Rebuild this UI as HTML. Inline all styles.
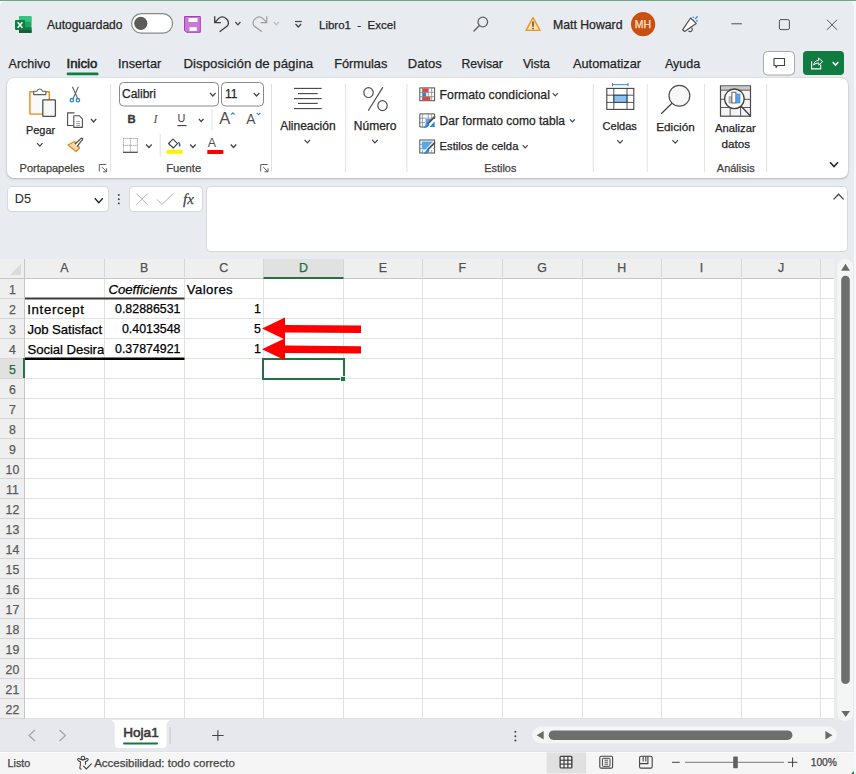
<!DOCTYPE html>
<html><head><meta charset="utf-8">
<style>
*{box-sizing:border-box;margin:0;padding:0}
html,body{width:856px;height:774px;overflow:hidden;background:#f4f7fb;font-family:"Liberation Sans",sans-serif;color:#242424;position:relative}
.a{position:absolute}
.t{position:absolute;white-space:nowrap;line-height:1;-webkit-text-stroke:0.25px currentColor}
</style></head><body>
<div class="a" style="left:0;top:0;width:856px;height:1px;background:#6ba684"></div>
<div class="a" style="left:0;top:1px;width:854px;height:773px;background:#e8ecf0;border-radius:6px 6px 0 0"></div>
<div class="a" style="left:7px;top:78px;width:841px;height:99.5px;background:#fff;border-radius:7px;box-shadow:0 0 0 0.5px rgba(0,0,0,.06),0 1px 2.5px rgba(0,0,0,.22)"></div>
<div class="a" style="left:8px;top:187px;width:100px;height:24px;background:#fff;border-radius:4px;box-shadow:0 0 0 1px #d9d9d9,0 1px 1px rgba(0,0,0,.08)"></div>
<div class="a" style="left:130px;top:187px;width:71.5px;height:24px;background:#fff;border-radius:4px;box-shadow:0 0 0 1px #d9d9d9,0 1px 1px rgba(0,0,0,.08)"></div>
<div class="a" style="left:207px;top:187px;width:640px;height:64px;background:#fff;border-radius:4px;box-shadow:0 0 0 1px #d9d9d9,0 1px 1px rgba(0,0,0,.08)"></div>
<div class="a" style="left:0;top:720px;width:854px;height:31px;background:#e6e8ed"></div>
<div class="a" style="left:0;top:751px;width:854px;height:1px;background:#e2e3e8"></div>
<div class="a" style="left:0;top:752px;width:854px;height:22px;background:#f5f5f5;border-top:1px solid #fbfbfb"></div>
<svg class="a" style="left:0;top:0" width="856" height="774"><rect x="0" y="259" width="834" height="19" fill="#efefef"/><rect x="263.5" y="259" width="80" height="19" fill="#e1e1e1"/><rect x="25" y="278" width="809" height="442" fill="#ffffff"/><rect x="0" y="278" width="24.5" height="442" fill="#efefef"/><rect x="0" y="358" width="24.5" height="20" fill="#e1e1e1"/><line x1="25" y1="298.5" x2="834" y2="298.5" stroke="#e1e1e1" stroke-width="1"/><line x1="0" y1="298.5" x2="24" y2="298.5" stroke="#d6d6d6" stroke-width="1"/><line x1="25" y1="318.5" x2="834" y2="318.5" stroke="#e1e1e1" stroke-width="1"/><line x1="0" y1="318.5" x2="24" y2="318.5" stroke="#d6d6d6" stroke-width="1"/><line x1="25" y1="338.5" x2="834" y2="338.5" stroke="#e1e1e1" stroke-width="1"/><line x1="0" y1="338.5" x2="24" y2="338.5" stroke="#d6d6d6" stroke-width="1"/><line x1="25" y1="358.5" x2="834" y2="358.5" stroke="#e1e1e1" stroke-width="1"/><line x1="0" y1="358.5" x2="24" y2="358.5" stroke="#d6d6d6" stroke-width="1"/><line x1="25" y1="378.5" x2="834" y2="378.5" stroke="#e1e1e1" stroke-width="1"/><line x1="0" y1="378.5" x2="24" y2="378.5" stroke="#d6d6d6" stroke-width="1"/><line x1="25" y1="398.5" x2="834" y2="398.5" stroke="#e1e1e1" stroke-width="1"/><line x1="0" y1="398.5" x2="24" y2="398.5" stroke="#d6d6d6" stroke-width="1"/><line x1="25" y1="418.5" x2="834" y2="418.5" stroke="#e1e1e1" stroke-width="1"/><line x1="0" y1="418.5" x2="24" y2="418.5" stroke="#d6d6d6" stroke-width="1"/><line x1="25" y1="438.5" x2="834" y2="438.5" stroke="#e1e1e1" stroke-width="1"/><line x1="0" y1="438.5" x2="24" y2="438.5" stroke="#d6d6d6" stroke-width="1"/><line x1="25" y1="458.5" x2="834" y2="458.5" stroke="#e1e1e1" stroke-width="1"/><line x1="0" y1="458.5" x2="24" y2="458.5" stroke="#d6d6d6" stroke-width="1"/><line x1="25" y1="478.5" x2="834" y2="478.5" stroke="#e1e1e1" stroke-width="1"/><line x1="0" y1="478.5" x2="24" y2="478.5" stroke="#d6d6d6" stroke-width="1"/><line x1="25" y1="498.5" x2="834" y2="498.5" stroke="#e1e1e1" stroke-width="1"/><line x1="0" y1="498.5" x2="24" y2="498.5" stroke="#d6d6d6" stroke-width="1"/><line x1="25" y1="518.5" x2="834" y2="518.5" stroke="#e1e1e1" stroke-width="1"/><line x1="0" y1="518.5" x2="24" y2="518.5" stroke="#d6d6d6" stroke-width="1"/><line x1="25" y1="538.5" x2="834" y2="538.5" stroke="#e1e1e1" stroke-width="1"/><line x1="0" y1="538.5" x2="24" y2="538.5" stroke="#d6d6d6" stroke-width="1"/><line x1="25" y1="558.5" x2="834" y2="558.5" stroke="#e1e1e1" stroke-width="1"/><line x1="0" y1="558.5" x2="24" y2="558.5" stroke="#d6d6d6" stroke-width="1"/><line x1="25" y1="578.5" x2="834" y2="578.5" stroke="#e1e1e1" stroke-width="1"/><line x1="0" y1="578.5" x2="24" y2="578.5" stroke="#d6d6d6" stroke-width="1"/><line x1="25" y1="598.5" x2="834" y2="598.5" stroke="#e1e1e1" stroke-width="1"/><line x1="0" y1="598.5" x2="24" y2="598.5" stroke="#d6d6d6" stroke-width="1"/><line x1="25" y1="618.5" x2="834" y2="618.5" stroke="#e1e1e1" stroke-width="1"/><line x1="0" y1="618.5" x2="24" y2="618.5" stroke="#d6d6d6" stroke-width="1"/><line x1="25" y1="638.5" x2="834" y2="638.5" stroke="#e1e1e1" stroke-width="1"/><line x1="0" y1="638.5" x2="24" y2="638.5" stroke="#d6d6d6" stroke-width="1"/><line x1="25" y1="658.5" x2="834" y2="658.5" stroke="#e1e1e1" stroke-width="1"/><line x1="0" y1="658.5" x2="24" y2="658.5" stroke="#d6d6d6" stroke-width="1"/><line x1="25" y1="678.5" x2="834" y2="678.5" stroke="#e1e1e1" stroke-width="1"/><line x1="0" y1="678.5" x2="24" y2="678.5" stroke="#d6d6d6" stroke-width="1"/><line x1="25" y1="698.5" x2="834" y2="698.5" stroke="#e1e1e1" stroke-width="1"/><line x1="0" y1="698.5" x2="24" y2="698.5" stroke="#d6d6d6" stroke-width="1"/><line x1="25" y1="718.5" x2="834" y2="718.5" stroke="#e1e1e1" stroke-width="1"/><line x1="0" y1="718.5" x2="24" y2="718.5" stroke="#d6d6d6" stroke-width="1"/><line x1="104.5" y1="278" x2="104.5" y2="720" stroke="#e1e1e1" stroke-width="1"/><line x1="104.5" y1="259" x2="104.5" y2="277" stroke="#d6d6d6" stroke-width="1"/><line x1="184.5" y1="278" x2="184.5" y2="720" stroke="#e1e1e1" stroke-width="1"/><line x1="184.5" y1="259" x2="184.5" y2="277" stroke="#d6d6d6" stroke-width="1"/><line x1="263.5" y1="278" x2="263.5" y2="720" stroke="#e1e1e1" stroke-width="1"/><line x1="263.5" y1="259" x2="263.5" y2="277" stroke="#d6d6d6" stroke-width="1"/><line x1="343.5" y1="278" x2="343.5" y2="720" stroke="#e1e1e1" stroke-width="1"/><line x1="343.5" y1="259" x2="343.5" y2="277" stroke="#d6d6d6" stroke-width="1"/><line x1="422.5" y1="278" x2="422.5" y2="720" stroke="#e1e1e1" stroke-width="1"/><line x1="422.5" y1="259" x2="422.5" y2="277" stroke="#d6d6d6" stroke-width="1"/><line x1="502.5" y1="278" x2="502.5" y2="720" stroke="#e1e1e1" stroke-width="1"/><line x1="502.5" y1="259" x2="502.5" y2="277" stroke="#d6d6d6" stroke-width="1"/><line x1="582.5" y1="278" x2="582.5" y2="720" stroke="#e1e1e1" stroke-width="1"/><line x1="582.5" y1="259" x2="582.5" y2="277" stroke="#d6d6d6" stroke-width="1"/><line x1="661.5" y1="278" x2="661.5" y2="720" stroke="#e1e1e1" stroke-width="1"/><line x1="661.5" y1="259" x2="661.5" y2="277" stroke="#d6d6d6" stroke-width="1"/><line x1="741.5" y1="278" x2="741.5" y2="720" stroke="#e1e1e1" stroke-width="1"/><line x1="741.5" y1="259" x2="741.5" y2="277" stroke="#d6d6d6" stroke-width="1"/><line x1="820.5" y1="278" x2="820.5" y2="720" stroke="#e1e1e1" stroke-width="1"/><line x1="820.5" y1="259" x2="820.5" y2="277" stroke="#d6d6d6" stroke-width="1"/><line x1="0" y1="278.5" x2="834" y2="278.5" stroke="#c6c6c6" stroke-width="1"/><line x1="24.5" y1="259" x2="24.5" y2="720" stroke="#c6c6c6" stroke-width="1"/><line x1="0" y1="719.5" x2="834" y2="719.5" stroke="#e8e8e8" stroke-width="1"/><rect x="263.5" y="277" width="80" height="2" fill="#217346"/><rect x="23" y="358" width="2" height="20" fill="#217346"/><path d="M21 263.5 L21 275 L10 275 Z" fill="#dcdcdc"/><rect x="25" y="297.5" width="159.5" height="2" fill="#3a3a3a"/><rect x="25" y="357.5" width="159.5" height="2.5" fill="#000000"/><rect x="263" y="359" width="81" height="20" fill="none" stroke="#217346" stroke-width="2"/><rect x="340.5" y="376.5" width="5" height="5" fill="#217346" stroke="#fff" stroke-width="0.8"/><path d="M262 328.6 L285 317.6 L285 324.90000000000003 L361 325.6 L361 332.90000000000003 L285 332.40000000000003 L285 339.6 Z" fill="#ff0000"/><path d="M262 349.2 L285 338.2 L285 345.5 L361 346.2 L361 353.5 L285 353.0 L285 360.2 Z" fill="#ff0000"/></svg>
<svg class="a" style="left:0;top:0" width="856" height="774"><rect x="19" y="16" width="12.5" height="17" rx="1.5" fill="#21a366"/><rect x="19" y="16" width="12.5" height="5.7" rx="1" fill="#33c481"/><rect x="19" y="27.3" width="12.5" height="5.7" rx="1" fill="#107c41"/><rect x="19" y="30" width="12.5" height="3" fill="#185c37"/><rect x="15" y="20" width="10" height="10" rx="1" fill="#107c41"/><path d="M17.6 22.2 L22.4 27.8 M22.4 22.2 L17.6 27.8" stroke="#fff" stroke-width="1.5"/><rect x="131.6" y="13.6" width="41" height="19.6" rx="9.8" fill="#fff" stroke="#888" stroke-width="1.2"/><circle cx="140.8" cy="23.3" r="6.6" fill="#5c5c5c"/><path d="M184.5 16.5 H200.3 V32.3 H186.5 L184.5 30.3 Z" fill="#c978d6" stroke="#a83bb8" stroke-width="1"/><rect x="188.5" y="18" width="9" height="4" fill="#fff"/><rect x="189.5" y="27.2" width="7.2" height="3.8" fill="#fff"/><path d="M214.7 16.3 V22.7 H220.9 M215.2 22.2 L218.5 18.6 A5.9 5.9 0 0 1 227.6 25.8 L219.6 31.8" fill="none" stroke="#3c3c3c" stroke-width="1.3" stroke-linejoin="round"/><path d="M235.4 22.0 L237.9 24.799999999999997 L240.4 22.0" fill="none" stroke="#424242" stroke-width="1.2"/><g transform="matrix(-1 0 0 1 481.5 0)"><path d="M214.7 16.3 V22.7 H220.9 M215.2 22.2 L218.5 18.6 A5.9 5.9 0 0 1 227.6 25.8 L219.6 31.8" fill="none" stroke="#9e9e9e" stroke-width="1.2" stroke-linejoin="round"/></g><path d="M273.7 22.0 L276.2 24.799999999999997 L278.7 22.0" fill="none" stroke="#bdbdbd" stroke-width="1.2"/><path d="M295 21.5 H301.7" stroke="#424242" stroke-width="1.2"/><path d="M295.55 24.0 L298.3 27.0 L301.05 24.0" fill="none" stroke="#424242" stroke-width="1.2"/><circle cx="482.8" cy="22" r="4.8" fill="none" stroke="#616161" stroke-width="1.3"/><path d="M479.4 25.5 L474 31" stroke="#616161" stroke-width="1.4" stroke-linecap="round"/><path d="M533 17.6 L540 30.4 H526 Z" fill="#fbe2a1" stroke="#f0922a" stroke-width="1.4" stroke-linejoin="round"/><path d="M533 21.6 V26.8" stroke="#4a4a4a" stroke-width="1.5"/><rect x="532.25" y="27.8" width="1.5" height="1.4" fill="#4a4a4a"/><circle cx="643.1" cy="24.2" r="12.1" fill="#ca5010"/><path d="M688.5 31 A2 2 0 1 0 691.5 27.6" fill="none" stroke="#505050" stroke-width="1.2"/><path d="M682.6 29.8 L690.6 18 L696.2 23.4 L684.6 31.4 Z" fill="#fff" stroke="#505050" stroke-width="1.25" stroke-linejoin="round"/><circle cx="693.3" cy="17.3" r="0.8" fill="#2b88d8"/><path d="M695.6 18.6 L697.2 16.8" stroke="#2b88d8" stroke-width="1.3" stroke-linecap="round"/><circle cx="697" cy="20.8" r="0.85" fill="#2b88d8"/><path d="M731.3 23.8 H741.9" stroke="#505050" stroke-width="1"/><rect x="779.4" y="19.6" width="10" height="10" rx="1.6" fill="none" stroke="#505050" stroke-width="1"/><path d="M827 19.8 L837 29.8 M837 19.8 L827 29.8" stroke="#505050" stroke-width="1"/><rect x="763.5" y="51.5" width="31" height="23.5" rx="4" fill="#fff" stroke="#a8a8a8" stroke-width="1"/><path d="M774 58.5 H784.5 V65.5 H777.5 L776 67.6 V65.5 H774 Z" fill="none" stroke="#424242" stroke-width="1.1" stroke-linejoin="round"/><rect x="803" y="51" width="41" height="24" rx="4" fill="#107c41"/><path d="M811.6 61.3 V68.9 H820.7 V64.4" fill="none" stroke="#fff" stroke-width="1.1"/><path d="M813.6 65 Q814.6 60.6 818.6 60.3 V58 L822.6 61.6 L818.8 65.2 V62.9 Q815.8 62.8 813.6 65 Z" fill="none" stroke="#fff" stroke-width="1" stroke-linejoin="round"/><path d="M832.7 62.1 L835.5 65.1 L838.3 62.1" fill="none" stroke="#fff" stroke-width="1.5"/><rect x="66.6" y="72.6" width="32" height="2.6" rx="1.3" fill="#107c41"/><rect x="110.1" y="84" width="1" height="88" fill="#e1e1e1"/><rect x="271.0" y="84" width="1" height="88" fill="#e1e1e1"/><rect x="345.2" y="84" width="1" height="88" fill="#e1e1e1"/><rect x="406.4" y="84" width="1" height="88" fill="#e1e1e1"/><rect x="592.7" y="84" width="1" height="88" fill="#e1e1e1"/><rect x="646.7" y="84" width="1" height="88" fill="#e1e1e1"/><rect x="704.1" y="84" width="1" height="88" fill="#e1e1e1"/><rect x="766.1" y="84" width="1" height="88" fill="#e1e1e1"/><rect x="29.9" y="91.8" width="19.4" height="22.3" rx="0.4" fill="#f9f9f9" stroke="#e8891a" stroke-width="1.4"/><path d="M33.6 94.6 V91.3 H36.8 A3 3 0 0 1 42.6 91.3 H45.8 V94.6 Z" fill="#fafafa" stroke="#616161" stroke-width="1.1" stroke-linejoin="round"/><rect x="42.8" y="99.9" width="12.6" height="16.5" rx="0.6" fill="#f8f8f8" stroke="#505050" stroke-width="1.3"/><path d="M37.05 143.1 L39.8 146.1 L42.55 143.1" fill="none" stroke="#424242" stroke-width="1.2"/><path d="M72.4 86.7 L77.9 99 M78.4 86.7 L72.9 99" stroke="#616161" stroke-width="1.1"/><circle cx="71.9" cy="100.2" r="1.7" fill="none" stroke="#2b88d8" stroke-width="1.3"/><circle cx="77.9" cy="100.2" r="1.7" fill="none" stroke="#2b88d8" stroke-width="1.3"/><path d="M74.5 112.9 H67.6 V125.5 H73.5" fill="none" stroke="#505050" stroke-width="1.1"/><path d="M73.8 115.7 H79.3 L82.4 118.8 V127.4 H73.8 Z" fill="#fff" stroke="#505050" stroke-width="1.1" stroke-linejoin="round"/><path d="M76.2 121.6 H80.2 M76.2 123.6 H80.2 M76.2 125.6 H80.2" stroke="#616161" stroke-width="0.6"/><path d="M91.0 119.0 L93.6 122.0 L96.19999999999999 119.0" fill="none" stroke="#424242" stroke-width="1.2"/><path d="M68 145 L74.5 141.5 L79.5 148 L76 151.5 Z" fill="#fbd7b0" stroke="#e8891a" stroke-width="1.3" stroke-linejoin="round"/><path d="M74.8 144.3 L78.8 140.5 L81.2 138.3 A1 1 0 0 1 82.6 139.7 L80.4 142.1 L77 146.6" fill="#fff" stroke="#505050" stroke-width="1.2" stroke-linejoin="round"/><path d="M99.3 171.5 V164.5 H106.3" fill="none" stroke="#616161" stroke-width="1"/><path d="M101.8 167 L106.6 171.8 M106.6 168.3 V171.8 H103.1" fill="none" stroke="#616161" stroke-width="1"/><path d="M260.7 171.5 V164.5 H267.7" fill="none" stroke="#616161" stroke-width="1"/><path d="M263.2 167 L268.0 171.8 M268.0 168.3 V171.8 H264.5" fill="none" stroke="#616161" stroke-width="1"/><rect x="119.5" y="82.5" width="99" height="23.5" rx="4" fill="#fff" stroke="#8a8a8a" stroke-width="1"/><rect x="221.5" y="82.5" width="42" height="23.5" rx="4" fill="#fff" stroke="#8a8a8a" stroke-width="1"/><path d="M210.05 93.0 L212.8 96.0 L215.55 93.0" fill="none" stroke="#424242" stroke-width="1.2"/><path d="M253.75 93.0 L256.5 96.0 L259.25 93.0" fill="none" stroke="#424242" stroke-width="1.2"/><path d="M177.3 125.6 H186.6" stroke="#424242" stroke-width="1.1"/><path d="M198.79999999999998 118.9 L201.2 121.5 L203.6 118.9" fill="none" stroke="#424242" stroke-width="1.2"/><rect x="211.4" y="109" width="1" height="21" fill="#e1e1e1"/><path d="M231 114.6 L232.8 112.8 L234.6 114.6" fill="none" stroke="#2b88d8" stroke-width="1.1"/><path d="M256.8 112.8 L258.6 114.6 L260.4 112.8" fill="none" stroke="#2b88d8" stroke-width="1.1"/><path d="M123.4 138.4 H137.4 V152.3 M123.4 138.4 V152.3 M130.4 138.4 V152.3 M123.4 145.4 H137.4" fill="none" stroke="#767676" stroke-width="0.9" stroke-dasharray="1 1"/><path d="M123 152.3 H137.8" stroke="#424242" stroke-width="1.2"/><path d="M146.15 144.5 L148.9 147.5 L151.65 144.5" fill="none" stroke="#424242" stroke-width="1.2"/><rect x="159.7" y="134" width="1" height="22.8" fill="#e1e1e1"/><path d="M168.5 143.5 L173 139.2 L177.5 143.7 L173.3 148 Z" fill="#fff" stroke="#424242" stroke-width="1.1" stroke-linejoin="round"/><path d="M178.5 142 Q180 143.5 179.6 146.5" fill="none" stroke="#2b6cb0" stroke-width="1.6"/><rect x="166.6" y="149.8" width="16" height="4" fill="#fff200"/><path d="M190.15 144.5 L192.9 147.5 L195.65 144.5" fill="none" stroke="#424242" stroke-width="1.2"/><rect x="207.3" y="150" width="16" height="4" fill="#ff0000"/><path d="M230.75 144.5 L233.5 147.5 L236.25 144.5" fill="none" stroke="#424242" stroke-width="1.2"/><path d="M294 88.4 H321.7" stroke="#424242" stroke-width="1.1"/><path d="M298 93.6 H317.7" stroke="#424242" stroke-width="1.1"/><path d="M294 98.6 H321.7" stroke="#424242" stroke-width="1.1"/><path d="M298 103.4 H317.7" stroke="#424242" stroke-width="1.1"/><path d="M294 108.6 H321.7" stroke="#424242" stroke-width="1.1"/><path d="M304.65 139.8 L307.4 142.8 L310.15 139.8" fill="none" stroke="#424242" stroke-width="1.2"/><ellipse cx="368.5" cy="92.6" rx="4.7" ry="4.9" fill="none" stroke="#505050" stroke-width="1.2"/><ellipse cx="382.5" cy="105.6" rx="4.7" ry="5" fill="none" stroke="#505050" stroke-width="1.2"/><path d="M382.6 87.6 L368.5 110.3" stroke="#505050" stroke-width="1.2" stroke-linecap="round"/><path d="M372.15 139.8 L374.9 142.8 L377.65 139.8" fill="none" stroke="#424242" stroke-width="1.2"/><rect x="419.8" y="87.9" width="14.8" height="12.8" fill="#fff" stroke="#505050" stroke-width="1"/><rect x="422.4" y="88.4" width="5.8" height="4" fill="#e84040"/><rect x="422.4" y="92.6" width="3.8" height="4" fill="#2b88d8"/><rect x="422.4" y="96.8" width="8" height="3.6" fill="#e84040"/><path d="M419.8 92.3 H434.6 M419.8 96.6 H434.6 M422.4 87.9 V100.7 M428.3 87.9 V100.7 M431.7 87.9 V100.7" stroke="#7a7a7a" stroke-width="0.7"/><path d="M552.8 93.2 L555.3 95.8 L557.8 93.2" fill="none" stroke="#424242" stroke-width="1.2"/><path d="M425 127 H419.8 V113.9 H434.6 V119" fill="none" stroke="#505050" stroke-width="1"/><path d="M419.8 118.2 H434.6 M419.8 122.6 H425 M422.4 113.9 V127 M428.3 113.9 V118.2 M431.7 113.9 V118.2" stroke="#7a7a7a" stroke-width="0.7"/><path d="M425.5 119 H433.2 L426.5 126.4 H425.5 Z" fill="#5aa7e8"/><path d="M434.6 121.5 V127 H429.5 Z" fill="#2b88d8"/><path d="M434.5 116.8 L427.5 123.8" stroke="#505050" stroke-width="1.8" stroke-linecap="round"/><path d="M427.8 123.2 L424.2 127.4 Q426.8 128.2 429.2 125 Z" fill="#2b88d8" stroke="#2b88d8" stroke-width="0.8"/><path d="M569.9 119.3 L572.4 121.89999999999999 L574.9 119.3" fill="none" stroke="#424242" stroke-width="1.2"/><rect x="419.8" y="140" width="14.8" height="13" fill="#fff" stroke="#505050" stroke-width="1"/><path d="M421.8 141.5 H433 L425.5 149.5 H421.8 Z" fill="#5aa7e8"/><path d="M419.8 144.4 H421.8 M419.8 148.6 H421.8 M433 148.6 H434.6 M422.4 150 V153 M428.3 150 V153 M431.7 150 V153" stroke="#7a7a7a" stroke-width="0.7"/><path d="M434.5 142.8 L427.5 149.8" stroke="#505050" stroke-width="1.8" stroke-linecap="round"/><path d="M427.8 149.2 L424.2 153.4 Q426.8 154.2 429.2 151 Z" fill="#2b88d8" stroke="#2b88d8" stroke-width="0.8"/><path d="M522.7 145.2 L525.2 147.8 L527.7 145.2" fill="none" stroke="#424242" stroke-width="1.2"/><path d="M612.5 84.7 H628 M612.5 83 V86.4 M628 83 V86.4" stroke="#2b88d8" stroke-width="1"/><rect x="606.8" y="88.4" width="27" height="21" fill="#fff" stroke="#424242" stroke-width="1.1"/><rect x="613.8" y="95.2" width="13.2" height="7.2" fill="#8cc0ef" stroke="#1f6fbf" stroke-width="1"/><path d="M606.8 95.2 H633.8 M606.8 102.4 H633.8 M613.8 88.4 V109.4 M627 88.4 V109.4" stroke="#424242" stroke-width="0.9"/><path d="M617.25 140.1 L620 143.1 L622.75 140.1" fill="none" stroke="#424242" stroke-width="1.2"/><circle cx="679.4" cy="95.8" r="10.4" fill="#f7f7f7" stroke="#505050" stroke-width="1.2"/><path d="M672 103.2 L661.2 113.8" stroke="#424242" stroke-width="1.2"/><path d="M672.45 140.1 L675.2 143.1 L677.95 140.1" fill="none" stroke="#424242" stroke-width="1.2"/><rect x="720.5" y="85.9" width="30" height="30.3" fill="#f4f4f4" stroke="#4a4a4a" stroke-width="1.2"/><rect x="721" y="86.5" width="29" height="3.6" fill="#c8c8c8"/><path d="M720.5 90.2 H750.5 M720.5 99.3 H750.5 M720.5 107.5 H750.5 M730.2 90.2 V116.2 M740.6 90.2 V116.2" stroke="#5a5a5a" stroke-width="1"/><circle cx="734.4" cy="98.8" r="9.8" fill="#fff" stroke="#424242" stroke-width="1.4"/><rect x="729" y="96.8" width="2.2" height="6.2" fill="#c8c8c8" stroke="#6a6a6a" stroke-width="0.5"/><rect x="731.9" y="92.2" width="4" height="10.8" fill="#fff" stroke="#505050" stroke-width="0.9"/><rect x="736.6" y="94" width="3.4" height="9" fill="#5aa7e8" stroke="#2b88d8" stroke-width="0.6"/><path d="M741.2 106.3 L750.8 116.4" stroke="#424242" stroke-width="1.4"/><path d="M830.0 162.20000000000002 L834 166.6 L838.0 162.20000000000002" fill="none" stroke="#242424" stroke-width="1.5"/><path d="M94.8 198.3 L98.8 202.7 L102.8 198.3" fill="none" stroke="#242424" stroke-width="1.4"/><circle cx="118.8" cy="195" r="0.95" fill="#424242"/><circle cx="118.8" cy="199.2" r="0.95" fill="#424242"/><circle cx="118.8" cy="203.4" r="0.95" fill="#424242"/><path d="M136.4 193.6 L147.6 204.8 M147.6 193.6 L136.4 204.8" stroke="#b4b4b4" stroke-width="1"/><path d="M157.2 199.4 L162 204.4 L173.2 193.6" fill="none" stroke="#b4b4b4" stroke-width="1"/><path d="M833.6 199.4 L838.6 194.2 L843.6 199.4" fill="none" stroke="#424242" stroke-width="1.3"/><rect x="837.5" y="259" width="15.5" height="462" rx="7.7" fill="#f5f5f5"/><path d="M841 270.7 L845.5 263.7 L850 270.7 Z" fill="#6a6a6a"/><rect x="841.2" y="275.8" width="8.6" height="408.2" rx="4.3" fill="#6e6e6e"/><path d="M841.4 711 L845.7 717 L850 711 Z" fill="#6a6a6a"/><rect x="532.4" y="726.6" width="304.6" height="16.7" rx="8.3" fill="#f5f5f5"/><path d="M543.7 731 L536.6 735.3 L543.7 739.6 Z" fill="#6a6a6a"/><rect x="548.7" y="730.4" width="243.7" height="9.6" rx="4.8" fill="#6e6e6e"/><path d="M825.4 731 L832.4 735.3 L825.4 739.6 Z" fill="#6a6a6a"/><circle cx="515.4" cy="731.8" r="1" fill="#424242"/><circle cx="515.4" cy="736.2" r="1" fill="#424242"/><circle cx="515.4" cy="740.6" r="1" fill="#424242"/><path d="M35 730 L29 735.5 L35 741" fill="none" stroke="#a0a0a0" stroke-width="1.1"/><path d="M59.5 730 L65.5 735.5 L59.5 741" fill="none" stroke="#a0a0a0" stroke-width="1.1"/><path d="M109.6 720 H171.6 A5 5 0 0 0 166.6 725 V744 A4 4 0 0 1 162.6 748 H118.8 A4 4 0 0 1 114.8 744 V725 A5 5 0 0 0 109.6 720 Z" fill="#fff"/><rect x="123" y="742.6" width="35" height="2" rx="1" fill="#107c41"/><rect x="169.6" y="727" width="1" height="17" fill="#c8c8c8"/><path d="M212.2 735.5 H223.6 M217.9 730.2 V740.8" stroke="#424242" stroke-width="1.1"/><rect x="546.6" y="752.4" width="39.5" height="21" fill="#e0e0e0"/><rect x="559.5" y="755.7" width="13" height="12.8" rx="1.6" fill="#3c3c3c"/><rect x="560.75" y="756.95" width="2.7" height="2.7" fill="#f0f0f0"/><rect x="560.75" y="760.80" width="2.7" height="2.7" fill="#f0f0f0"/><rect x="560.75" y="764.65" width="2.7" height="2.7" fill="#f0f0f0"/><rect x="564.60" y="756.95" width="2.7" height="2.7" fill="#f0f0f0"/><rect x="564.60" y="760.80" width="2.7" height="2.7" fill="#f0f0f0"/><rect x="564.60" y="764.65" width="2.7" height="2.7" fill="#f0f0f0"/><rect x="568.45" y="756.95" width="2.7" height="2.7" fill="#f0f0f0"/><rect x="568.45" y="760.80" width="2.7" height="2.7" fill="#f0f0f0"/><rect x="568.45" y="764.65" width="2.7" height="2.7" fill="#f0f0f0"/><rect x="599.8" y="756.3" width="12.8" height="11.8" rx="1.4" fill="none" stroke="#424242" stroke-width="1.1"/><rect x="602.4" y="758.3" width="7.6" height="8" rx="0.8" fill="none" stroke="#424242" stroke-width="1"/><path d="M604.5 760.2 H608 M604.5 762.2 H608 M604.5 764.2 H608" stroke="#424242" stroke-width="0.9"/><rect x="639.6" y="756.3" width="12.6" height="11.8" rx="1.4" fill="none" stroke="#424242" stroke-width="1.1"/><path d="M640 763.6 H647.9 V756.5 M643.2 756.5 V761.5 M645.8 756.5 V761.5" fill="none" stroke="#424242" stroke-width="1.1"/><path d="M672 762.3 H679.7" stroke="#424242" stroke-width="1"/><rect x="685" y="761.8" width="99" height="1" fill="#7a7a7a"/><rect x="733.2" y="756.6" width="4.6" height="11.6" rx="0.8" fill="#616161"/><path d="M787.8 762.3 H797.4 M792.6 757.5 V767.1" stroke="#424242" stroke-width="1"/><circle cx="82.9" cy="758.1" r="1.8" fill="none" stroke="#424242" stroke-width="1.1"/><path d="M80.3 761.6 Q78 761.2 77.6 759.6 Q77.8 758.2 79.2 758.6 Q81 759.8 82.9 759.9 Q84.8 759.8 86.6 758.6 Q88 758.2 88.2 759.6 Q87.8 761.2 85.5 761.6 M80.3 761.6 Q80.6 765 79.8 767.8 Q79.8 769.2 81.3 769 M85.5 761.6 V764.2" fill="none" stroke="#424242" stroke-width="1.1" stroke-linecap="round"/><path d="M83.6 766.2 L86.3 768.9 L91.4 763.9" fill="none" stroke="#424242" stroke-width="1.1" stroke-linecap="round"/><path d="M851 774 L854 771 V774 Z" fill="#107c41"/></svg>
<div class="t" style="left:47.00px;top:18.84px;font-size:12px;color:#242424;font-weight:normal;font-style:normal;">Autoguardado</div>
<div class="t" style="left:319.00px;top:19.77px;font-size:11.5px;color:#242424;font-weight:normal;font-style:normal;">Libro1 &nbsp;-&nbsp; Excel</div>
<div class="t" style="left:553.00px;top:19.13px;font-size:12.25px;color:#242424;font-weight:normal;font-style:normal;">Matt Howard</div>
<div class="t" style="left:8.60px;top:57.92px;font-size:12.5px;color:#242424;font-weight:normal;font-style:normal;">Archivo</div>
<div class="t" style="left:66.60px;top:57.33px;font-size:13.2px;color:#242424;font-weight:normal;font-style:normal;-webkit-text-stroke:0.55px currentColor;">Inicio</div>
<div class="t" style="left:118.00px;top:57.71px;font-size:12.75px;color:#242424;font-weight:normal;font-style:normal;">Insertar</div>
<div class="t" style="left:183.50px;top:57.28px;font-size:13.25px;color:#242424;font-weight:normal;font-style:normal;">Disposición de página</div>
<div class="t" style="left:334.20px;top:57.71px;font-size:12.75px;color:#242424;font-weight:normal;font-style:normal;">Fórmulas</div>
<div class="t" style="left:407.80px;top:56.90px;font-size:13px;color:#242424;font-weight:normal;font-style:normal;">Datos</div>
<div class="t" style="left:461.50px;top:58.17px;font-size:12.2px;color:#242424;font-weight:normal;font-style:normal;">Revisar</div>
<div class="t" style="left:522.90px;top:58.13px;font-size:12.25px;color:#242424;font-weight:normal;font-style:normal;">Vista</div>
<div class="t" style="left:573.00px;top:57.71px;font-size:12.75px;color:#242424;font-weight:normal;font-style:normal;">Automatizar</div>
<div class="t" style="left:665.00px;top:57.92px;font-size:12.5px;color:#242424;font-weight:normal;font-style:normal;">Ayuda</div>
<div class="t" style="left:26.00px;top:124.57px;font-size:10.9px;color:#242424;font-weight:normal;font-style:normal;">Pegar</div>
<div class="t" style="left:19.60px;top:163.49px;font-size:11px;color:#424242;font-weight:normal;font-style:normal;">Portapapeles</div>
<div class="t" style="left:166.20px;top:163.28px;font-size:11.25px;color:#424242;font-weight:normal;font-style:normal;">Fuente</div>
<div class="t" style="left:280.20px;top:120.14px;font-size:12px;color:#242424;font-weight:normal;font-style:normal;">Alineación</div>
<div class="t" style="left:353.80px;top:120.14px;font-size:12px;color:#242424;font-weight:normal;font-style:normal;">Número</div>
<div class="t" style="left:439.60px;top:89.03px;font-size:12.25px;color:#242424;font-weight:normal;font-style:normal;">Formato condicional</div>
<div class="t" style="left:439.60px;top:114.94px;font-size:12px;color:#242424;font-weight:normal;font-style:normal;">Dar formato como tabla</div>
<div class="t" style="left:439.60px;top:141.48px;font-size:11.25px;color:#242424;font-weight:normal;font-style:normal;">Estilos de celda</div>
<div class="t" style="left:484.30px;top:163.17px;font-size:10.9px;color:#424242;font-weight:normal;font-style:normal;">Estilos</div>
<div class="t" style="left:602.60px;top:121.19px;font-size:11px;color:#242424;font-weight:normal;font-style:normal;">Celdas</div>
<div class="t" style="left:656.20px;top:120.55px;font-size:11.75px;color:#242424;font-weight:normal;font-style:normal;">Edición</div>
<div class="t" style="left:715.00px;top:123.08px;font-size:11.25px;color:#242424;font-weight:normal;font-style:normal;">Analizar</div>
<div class="t" style="left:721.40px;top:138.35px;font-size:11.75px;color:#242424;font-weight:normal;font-style:normal;">datos</div>
<div class="t" style="left:716.80px;top:163.39px;font-size:11px;color:#424242;font-weight:normal;font-style:normal;">Análisis</div>
<div class="t" style="left:122.00px;top:88.14px;font-size:12px;color:#242424;font-weight:normal;font-style:normal;">Calibri</div>
<div class="t" style="left:225.00px;top:88.14px;font-size:12px;color:#242424;font-weight:normal;font-style:normal;">11</div>
<div class="t" style="left:127.40px;top:113.95px;font-size:11.4px;color:#3a3a3a;font-weight:bold;font-style:normal;-webkit-text-stroke:0.3px currentColor;">B</div>
<div class="t" style="left:153.60px;top:113.44px;font-size:12px;color:#505050;font-weight:normal;font-style:italic;font-family:'Liberation Serif',serif;-webkit-text-stroke:0;">I</div>
<div class="t" style="left:177.40px;top:113.06px;font-size:10.8px;color:#424242;font-weight:normal;font-style:normal;-webkit-text-stroke:0;">U</div>
<div class="t" style="left:219.20px;top:110.85px;font-size:16.6px;color:#505050;font-weight:normal;font-style:normal;-webkit-text-stroke:0;">A</div>
<div class="t" style="left:246.30px;top:113.32px;font-size:13.8px;color:#505050;font-weight:normal;font-style:normal;-webkit-text-stroke:0;">A</div>
<div class="t" style="left:207.80px;top:137.30px;font-size:12.4px;color:#505050;font-weight:normal;font-style:normal;-webkit-text-stroke:0;">A</div>
<div class="t" style="left:14.80px;top:193.25px;font-size:12.7px;color:#303030;font-weight:normal;font-style:normal;-webkit-text-stroke:0.1px currentColor;">D5</div>
<div class="t" style="left:183.00px;top:191.80px;font-size:15px;color:#424242;font-weight:normal;font-style:italic;font-family:'Liberation Serif',serif;">fx</div>
<div class="t" style="left:634.70px;top:19.11px;font-size:10.5px;color:#fde3cc;font-weight:normal;font-style:normal;">MH</div>
<div class="t" style="left:7.60px;top:757.70px;font-size:10.75px;color:#424242;font-weight:normal;font-style:normal;">Listo</div>
<div class="t" style="left:94.20px;top:757.77px;font-size:11.5px;color:#424242;font-weight:normal;font-style:normal;">Accesibilidad: todo correcto</div>
<div class="t" style="left:810.70px;top:757.72px;font-size:10.25px;color:#424242;font-weight:normal;font-style:normal;">100%</div>
<div class="t" style="left:123.20px;top:726.29px;font-size:13.6px;color:#3a3a3a;font-weight:normal;font-style:normal;-webkit-text-stroke:0.6px currentColor;">Hoja1</div>
<div class="t" style="left:64.45px;transform:translateX(-50%);top:262.40px;font-size:12.4px;color:#505050;font-weight:normal;font-style:normal;">A</div><div class="t" style="left:144.20px;transform:translateX(-50%);top:262.40px;font-size:12.4px;color:#505050;font-weight:normal;font-style:normal;">B</div><div class="t" style="left:223.75px;transform:translateX(-50%);top:262.40px;font-size:12.4px;color:#505050;font-weight:normal;font-style:normal;">C</div><div class="t" style="left:303.45px;transform:translateX(-50%);top:262.40px;font-size:12.4px;color:#1e6b41;font-weight:normal;font-style:normal;">D</div><div class="t" style="left:382.90px;transform:translateX(-50%);top:262.40px;font-size:12.4px;color:#505050;font-weight:normal;font-style:normal;">E</div><div class="t" style="left:462.40px;transform:translateX(-50%);top:262.40px;font-size:12.4px;color:#505050;font-weight:normal;font-style:normal;">F</div><div class="t" style="left:542.20px;transform:translateX(-50%);top:262.40px;font-size:12.4px;color:#505050;font-weight:normal;font-style:normal;">G</div><div class="t" style="left:621.70px;transform:translateX(-50%);top:262.40px;font-size:12.4px;color:#505050;font-weight:normal;font-style:normal;">H</div><div class="t" style="left:701.40px;transform:translateX(-50%);top:262.40px;font-size:12.4px;color:#505050;font-weight:normal;font-style:normal;">I</div><div class="t" style="left:781.15px;transform:translateX(-50%);top:262.40px;font-size:12.4px;color:#505050;font-weight:normal;font-style:normal;">J</div><div class="t" style="left:12.40px;transform:translateX(-50%);top:284.19px;font-size:12.3px;color:#5a5a5a;font-weight:normal;font-style:normal;">1</div><div class="t" style="left:12.40px;transform:translateX(-50%);top:304.19px;font-size:12.3px;color:#5a5a5a;font-weight:normal;font-style:normal;">2</div><div class="t" style="left:12.40px;transform:translateX(-50%);top:324.19px;font-size:12.3px;color:#5a5a5a;font-weight:normal;font-style:normal;">3</div><div class="t" style="left:12.40px;transform:translateX(-50%);top:344.19px;font-size:12.3px;color:#5a5a5a;font-weight:normal;font-style:normal;">4</div><div class="t" style="left:12.40px;transform:translateX(-50%);top:364.19px;font-size:12.3px;color:#1e6b41;font-weight:normal;font-style:normal;">5</div><div class="t" style="left:12.40px;transform:translateX(-50%);top:384.19px;font-size:12.3px;color:#5a5a5a;font-weight:normal;font-style:normal;">6</div><div class="t" style="left:12.40px;transform:translateX(-50%);top:404.19px;font-size:12.3px;color:#5a5a5a;font-weight:normal;font-style:normal;">7</div><div class="t" style="left:12.40px;transform:translateX(-50%);top:424.19px;font-size:12.3px;color:#5a5a5a;font-weight:normal;font-style:normal;">8</div><div class="t" style="left:12.40px;transform:translateX(-50%);top:444.19px;font-size:12.3px;color:#5a5a5a;font-weight:normal;font-style:normal;">9</div><div class="t" style="left:12.40px;transform:translateX(-50%);top:464.19px;font-size:12.3px;color:#5a5a5a;font-weight:normal;font-style:normal;">10</div><div class="t" style="left:12.40px;transform:translateX(-50%);top:484.19px;font-size:12.3px;color:#5a5a5a;font-weight:normal;font-style:normal;">11</div><div class="t" style="left:12.40px;transform:translateX(-50%);top:504.19px;font-size:12.3px;color:#5a5a5a;font-weight:normal;font-style:normal;">12</div><div class="t" style="left:12.40px;transform:translateX(-50%);top:524.19px;font-size:12.3px;color:#5a5a5a;font-weight:normal;font-style:normal;">13</div><div class="t" style="left:12.40px;transform:translateX(-50%);top:544.19px;font-size:12.3px;color:#5a5a5a;font-weight:normal;font-style:normal;">14</div><div class="t" style="left:12.40px;transform:translateX(-50%);top:564.19px;font-size:12.3px;color:#5a5a5a;font-weight:normal;font-style:normal;">15</div><div class="t" style="left:12.40px;transform:translateX(-50%);top:584.19px;font-size:12.3px;color:#5a5a5a;font-weight:normal;font-style:normal;">16</div><div class="t" style="left:12.40px;transform:translateX(-50%);top:604.19px;font-size:12.3px;color:#5a5a5a;font-weight:normal;font-style:normal;">17</div><div class="t" style="left:12.40px;transform:translateX(-50%);top:624.19px;font-size:12.3px;color:#5a5a5a;font-weight:normal;font-style:normal;">18</div><div class="t" style="left:12.40px;transform:translateX(-50%);top:644.19px;font-size:12.3px;color:#5a5a5a;font-weight:normal;font-style:normal;">19</div><div class="t" style="left:12.40px;transform:translateX(-50%);top:664.19px;font-size:12.3px;color:#5a5a5a;font-weight:normal;font-style:normal;">20</div><div class="t" style="left:12.40px;transform:translateX(-50%);top:684.19px;font-size:12.3px;color:#5a5a5a;font-weight:normal;font-style:normal;">21</div><div class="t" style="left:12.40px;transform:translateX(-50%);top:704.19px;font-size:12.3px;color:#5a5a5a;font-weight:normal;font-style:normal;">22</div><div class="t" style="left:108.40px;top:282.73px;font-size:13.2px;color:#000;font-weight:normal;font-style:italic;">Coefficients</div><div class="t" style="left:186.80px;top:282.73px;font-size:13.2px;color:#000;font-weight:normal;font-style:normal;letter-spacing:0.36px;">Valores</div><div class="t" style="left:27.20px;top:302.53px;font-size:13.2px;color:#000;font-weight:normal;font-style:normal;letter-spacing:0.68px;">Intercept</div><div class="t" style="left:27.50px;top:322.53px;font-size:13.2px;color:#000;font-weight:normal;font-style:normal;letter-spacing:-0.08px;">Job Satisfact</div><div class="a" style="left:25px;top:339px;width:79.4px;height:19px;overflow:hidden"><div class="t" style="left:2.50px;top:3.53px;font-size:13.2px;color:#000;font-weight:normal;font-style:normal;letter-spacing:-0.08px;">Social Desira</div></div><div class="t" style="right:675.50px;top:303.20px;font-size:12.4px;color:#000;font-weight:normal;font-style:normal;">0.82886531</div><div class="t" style="right:675.50px;top:323.20px;font-size:12.4px;color:#000;font-weight:normal;font-style:normal;">0.4013548</div><div class="t" style="right:675.50px;top:343.20px;font-size:12.4px;color:#000;font-weight:normal;font-style:normal;">0.37874921</div><div class="t" style="right:595.10px;top:303.20px;font-size:12.4px;color:#000;font-weight:normal;font-style:normal;">1</div><div class="t" style="right:595.10px;top:323.20px;font-size:12.4px;color:#000;font-weight:normal;font-style:normal;">5</div><div class="t" style="right:595.10px;top:343.20px;font-size:12.4px;color:#000;font-weight:normal;font-style:normal;">1</div>
</body></html>
